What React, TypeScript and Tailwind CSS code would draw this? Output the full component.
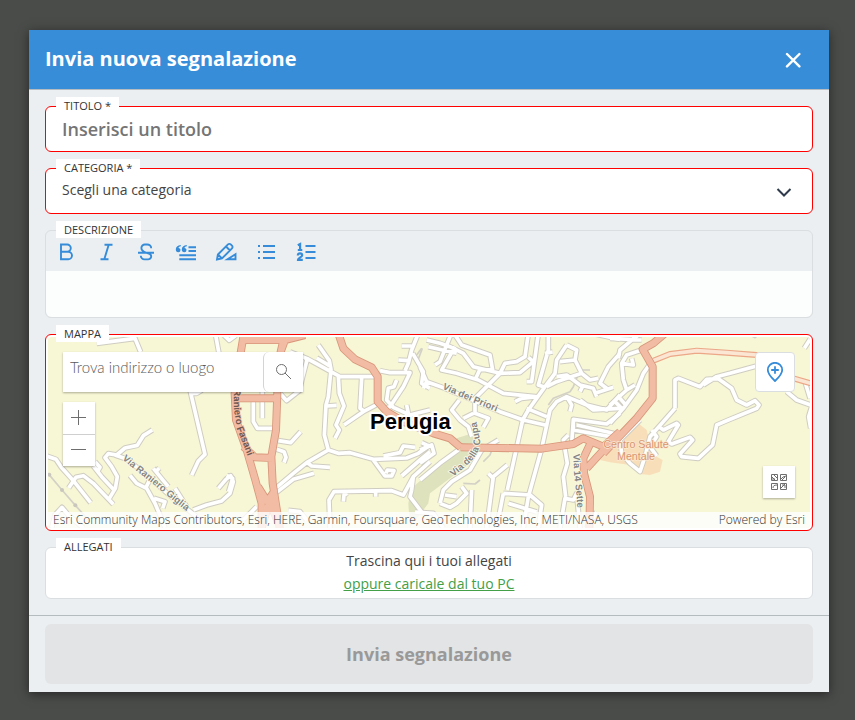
import type { ReactNode } from "react"
import clsx from "clsx"

interface FieldProps {
  id: string
  label: string
  invalid?: boolean
  className?: string
  children: ReactNode
}

function Field({ id, label, invalid, className, children }: FieldProps) {
  return (
    <div className={clsx("relative rounded-md border", invalid ? "border-[#fe0000]" : "border-[#dadee1]", className)}>
      <label
        htmlFor={id}
        className="absolute -top-[10px] left-[10px] z-10 bg-white px-2 text-[11px] leading-[17px] font-medium text-[#333] uppercase"
      >
        {label}
      </label>
      {children}
    </div>
  )
}

const tools = [
  {
    name: "Grassetto",
    icon: <path d="M5 2.500h6.200a3.600 3.600 0 0 1 0 7.200H5zM5 9.700h7.200a3.800 3.800 0 0 1 0 7.600H5z" />,
  },
  {
    name: "Corsivo",
    icon: <path d="M8.500 2.700h8M4.500 17.300h8M12.700 2.700l-4.400 14.600" />,
  },
  {
    name: "Barrato",
    icon: (
      <path d="M2 10.800h16M15.200 6.200c0-2.200-1.800-3.700-4-3.700H9a3.500 3.500 0 0 0-3.600 3.600c0 3.400 3 4 5 4.600 2.600.6 4.800 1.300 4.800 3.500a3.200 3.200 0 0 1-3.400 3.200H8.600a3.600 3.600 0 0 1-3.800-3.600" />
    ),
  },
  {
    name: "Citazione",
    icon: (
      <>
        <path d="M12.500 5.200H20M12.500 9H20M3.300 13.200H20M3.300 17.300H20" />
        <path
          d="M4.800 3C1.500 3.300-.2 5.200-.2 7.500c0 1.700.9 2.700 2.400 2.700a2.200 2.200 0 0 0 2.300-2.200c0-1.200-.8-2-2-2.100.2-.9 1-1.500 2.300-1.700zM10.800 3C7.500 3.300 5.800 5.200 5.800 7.500c0 1.700.9 2.700 2.400 2.700a2.200 2.200 0 0 0 2.300-2.200c0-1.200-.8-2-2-2.100.2-.9 1-1.500 2.300-1.700z"
          fill="currentColor"
          stroke="none"
        />
      </>
    ),
  },
  {
    name: "Evidenzia",
    icon: (
      <>
        <path d="M1 17.500l.9-5L12 2.400a1.900 1.900 0 0 1 2.700 0l1.300 1.300a1.900 1.900 0 0 1 0 2.700L6 16.500zM10 4.500l4 4M2 12.500l4 4" />
        <path d="M11.500 17.300 19.500 12.300v5z" />
      </>
    ),
  },
  {
    name: "Elenco puntato",
    icon: (
      <>
        <path d="M7 4H19M7 10H19M7 16H19" />
        <path d="M2 4h2M2 10h2M2 16h2" />
      </>
    ),
  },
  {
    name: "Elenco numerato",
    icon: (
      <>
        <path d="M9.500 4H19.500M9.500 10H19.500M9.500 16H19.500" />
        <path
          d="M1.800 3.200 4.100 2v6M1.800 8h4.500M1.800 13.500c.1-1.500 1-2.200 2.200-2.200s2.200.7 2.200 1.900c0 1.900-4.200 2.400-4.200 4.600h4.800"
          strokeWidth="2.200"
        />
      </>
    ),
  },
]

interface Tile {
  x: number
  roads: string
  main: string
  minor: string
}

// Map drawn at triple scale, in four tiles laid side by side
const tiles: Tile[] = [
  {
    x: 0,
    roads:
      "M170 40L285 25L302 66M526 10L538 76M552 16L568 31L588 16M450 180L495 373L475 393L455 436M450 190H470L486 180" +
      "M337 300L310 317L292 346L255 354L230 375L205 371L195 383L215 410L232 440L226 475L208 505" +
      "M20 378L48 388L64 412L100 452L152 518M86 474L108 442L130 437L160 460L220 523M160 408L185 440L222 480M165 395L180 412L172 425" +
      "M225 375L262 388L330 445L400 505L470 560M270 436L290 460L320 475L345 520L362 560L375 594M318 472L330 448" +
      "M342 505L375 515L368 535M340 415L370 452L385 470M345 428L358 414M405 475L440 530" +
      "M535 475L558 448L572 437L580 455L570 490L545 513L500 525L460 540M35 594L45 555L66 532L85 555L130 594",
    main: "",
    minor: "M24 430L66 480L106 526L150 575",
  },
  {
    x: 570,
    roads:
      "M265 45L298 92L303 118L295 200L288 225L283 315L295 360M180 66L232 86L330 140H435M260 84L303 110M232 86L218 140L208 182L170 212L150 190" +
      "M325 138L328 190L342 228L318 285L328 300L315 325M290 228L320 226M395 145L390 235L402 243M342 285L400 245L438 225" +
      "M295 360L325 370L360 368L430 388L530 384L565 370L600 345M295 360L230 398L190 430L140 472M252 430L190 448L140 487" +
      "M232 398L245 408L300 412M460 378L510 368L520 348L555 352M430 390L465 438L485 438L492 422L472 420L468 430M515 438L570 390L600 365" +
      "M300 594L297 510L312 485L485 482L520 495L550 440L600 395M340 515L342 495L352 490M437 500V488M145 332L182 338L212 305" +
      "M140 358L162 365L168 382L162 398M70 215V275L82 295H135M97 180V265M450 122L480 128H540L520 170L480 230L465 235" +
      "M500 150L492 170L475 175L470 210L490 232L540 255L600 240M565 10L545 60L535 100L525 122M548 70L580 125L575 160L600 175" +
      "M515 48H545M505 90L535 92M530 225L535 250M575 338L600 350M545 480L540 500L575 546M545 480L550 440" +
      "M-10 436L8 445L-4 485M175 541L210 545L230 570M40 570L80 530",
    main:
      "M325 10L340 55L375 88L425 112L443 140V215L470 245L520 275L610 310L660 325L692 352" +
      "M42 10L30 80L14 190L18 270L50 360L76 450L95 520V600M165 10L152 66L142 190L138 300L124 380L128 460L150 600" +
      "M20 205H140M40 350L75 382L130 384M30 30H165L225 15M165 30L152 66M95 594L118 515L150 590M84 470L112 515L135 480",
    minor: "M577 55L560 100",
  },
  {
    x: 1140,
    roads:
      "M20 30L60 40L90 50L130 70L160 110L240 130M25 50L110 70M92 15L60 95L45 105M105 15L125 45L210 75L218 120L180 118L165 150" +
      "M105 50L65 120L110 130L175 150L250 190L345 200M0 110L20 155L10 175M20 155L75 175L240 245L310 270L375 285" +
      "M240 130L165 205V250L205 265L190 292M325 10L315 80L290 95L255 100L240 130L300 128L340 95L325 82M355 10L335 155H320" +
      "M385 10V60L355 165L375 172M440 45L410 90L405 130L375 170L325 240L308 270L262 480M440 45L470 60L465 90L420 95" +
      "M465 90L485 130L440 145L410 155L380 170M485 130L510 150L535 145M410 140L440 135L480 165L520 175L530 200M490 165L480 185" +
      "M285 215L305 205L350 200M320 235L380 260M600 195L560 240L500 225L440 200L410 215L390 240L365 356L325 500L310 594" +
      "M440 200L455 225L450 245M525 190L580 172M480 210L520 240L600 235M600 250L560 282L460 268L460 300L600 325M460 268L455 340" +
      "M470 285L560 305L600 315M445 315L430 330L442 400L430 440L437 500M118 210L95 240L120 270L145 290L155 320M130 265L160 250" +
      "M60 520L70 480L95 455L150 420L185 360L235 330M0 450L60 400L115 360M0 360L35 345L42 370L0 400M60 520L90 532L110 520L140 490L125 470" +
      "M75 495L110 500M155 480L150 594M262 405L220 440L200 594M205 430L220 445M250 490L330 495L365 525L355 594M250 490L230 594M265 520L350 546" +
      "M420 594L435 505L460 510L470 490L480 594M375 70L398 66M-15 546L40 550L70 594M500 594L530 546M515 10L600 28M600 70L565 110L540 160L560 175",
    main: "M122 352L365 356L460 342L490 325L550 350L600 305M515 332L490 385L492 430L510 500L508 600M555 355L500 415",
    minor: "M385 225L400 205L450 185L460 170L480 120H510M225 335L210 375L190 395M-10 75L5 55M130 460L165 462L180 450",
  },
  {
    x: 1710,
    roads:
      "M195 235V150L205 145L270 170L290 148L325 146L365 175L380 210L410 225L435 212L447 225L440 235L355 270L320 285L308 345L265 385L215 380L210 372L248 330L240 322L185 342L175 335L205 285L200 280L160 300L150 292" +
      "M280 165L320 140L360 130L440 108M195 235L160 275L120 320L105 380L90 425L60 400L35 370L30 330L90 270M125 300L140 320L120 350L140 378" +
      "M530 185L560 210L610 228M585 155L600 205M605 230L596 260L602 295M125 95L100 130L80 180L40 235L0 280" +
      "M0 225L50 180L40 150L35 100L50 75L95 60M25 85L30 60L60 35L85 15M0 25L95 30M35 100L70 105L65 85M583 55L605 20M50 180L75 165M30 205L50 228M15 215L35 235",
    main: "M165 10L130 40L98 58L128 110V205L80 265L-20 370",
    minor: "M420 15L435 23L445 15",
  },
]

function Roads({ kind, className }: { kind: "roads" | "main" | "minor"; className: string }) {
  return (
    <g className={className} fill="none" strokeLinejoin="round">
      {tiles.map((tile) => (
        <path key={tile.x} d={tile[kind]} transform={`translate(${tile.x} 0)`} />
      ))}
    </g>
  )
}

function StreetMap() {
  return (
    <svg
      viewBox="24 21 2286 573"
      preserveAspectRatio="xMidYMid slice"
      className="absolute inset-0 size-full font-['Liberation_Sans',sans-serif] font-bold"
      aria-hidden="true"
    >
      <rect x="24" y="21" width="2286" height="573" fill="#f7f6d5" />
      <path
        d="M1250 325L1290 312L1325 345L1320 370L1290 400L1230 445L1170 490L1165 520L1110 594L1105 520L1115 475L1200 400L1255 360Z"
        fill="#dee3bd"
      />
      <path
        d="M1795 280L1820 300L1830 340L1840 375L1868 390L1860 425L1830 435L1800 432L1770 405L1710 397L1680 390L1740 320Z"
        fill="#f8dfba"
      />
      <Roads kind="minor" className="stroke-[#d3d1c6] stroke-[5px]" />
      <Roads kind="roads" className="stroke-[#cfcdc2] stroke-[17px]" />
      <Roads kind="roads" className="stroke-white stroke-[11px]" />
      <g fill="none" strokeLinejoin="round">
        <path d="M1840 92L1890 72L1970 62L2060 68L2150 75L2220 110L2260 145L2320 162" stroke="#eba787" strokeWidth="18" />
        <path d="M1840 92L1890 72L1970 62L2060 68L2150 75L2220 110L2260 145L2320 162" stroke="#fbe5d3" strokeWidth="11" />
      </g>
      <Roads kind="main" className="stroke-[#d8967a] stroke-[24px]" />
      <Roads kind="main" className="stroke-[#f2bba3] stroke-[19px]" />
      <circle cx="66" cy="480" r="6" fill="#c9c7bd" />
      <circle cx="106" cy="526" r="6" fill="#c9c7bd" />
      <circle cx="28" cy="434" r="6" fill="#c9c7bd" />

      <defs>
        <path id="via-giglia" d="M246 388L330 455L400 512L480 575" />
        <path id="via-fasani" d="M581 178L582 240L592 300L620 370L650 450" />
        <path id="via-priori" d="M1206 176L1290 213L1420 266" />
        <path id="via-cupa" d="M1240 440L1290 398Q1322 365 1320 330L1300 230" />
        <path id="via-sette" d="M1600 372L1602 430L1610 500L1614 594" />
      </defs>
      <g fontSize="29" fill="#858583" stroke="#fbfae8" strokeWidth="5" paintOrder="stroke">
        <text><textPath href="#via-giglia">Via Raniero Giglia</textPath></text>
        <text fill="#6d5750" stroke="#f2bba3"><textPath href="#via-fasani">Raniero Fasani</textPath></text>
        <text><textPath href="#via-priori">Via dei Priori</textPath></text>
        <text><textPath href="#via-cupa">Via della Cupa</textPath></text>
        <text><textPath href="#via-sette">Via 14 Sette</textPath></text>
      </g>
      <g fontSize="32" fontWeight="400" fill="#d9946f" stroke="#fbe9d2" strokeWidth="4" paintOrder="stroke" textAnchor="middle">
        <text x="1788" y="353">Centro Salute</text>
        <text x="1788" y="389">Mentale</text>
      </g>
      <text x="990" y="297" fontSize="66" fill="#000" stroke="#fff" strokeWidth="12" paintOrder="stroke" strokeLinejoin="round">
        Perugia
      </text>
    </svg>
  )
}

function MapField() {
  return (
    <div className="relative overflow-hidden rounded bg-[#f7f6d5] font-light text-[#323232]">
      <StreetMap />
      <div className="relative flex justify-between px-[15px] pt-[15px] pb-[14px]">
        <div className="flex flex-col items-start gap-[10px]">
          <div className="flex h-10 bg-white shadow-[0_1px_2px_rgba(0,0,0,0.3)]">
            <input
              id="mappa"
              type="text"
              placeholder="Trova indirizzo o luogo"
              className="w-[200px] px-[7px] pb-[10px] font-[Lato,sans-serif] text-[15px] outline-none placeholder:text-[#5a5a5a]"
            />
            <button
              type="button"
              aria-label="Cerca"
              className="flex w-10 items-center justify-center rounded-l-md border-l border-[#d4d4d4] text-[#6e6e6e]"
            >
              <svg viewBox="0 0 16 16" className="size-4" fill="none" stroke="currentColor">
                <circle cx="5.500" cy="5.500" r="5" />
                <path d="M9 9L15 15" />
              </svg>
            </button>
          </div>
          <div className="flex w-8 flex-col bg-white text-[#6e6e6e] shadow-[0_1px_2px_rgba(0,0,0,0.3)]">
            <button type="button" aria-label="Ingrandisci" className="flex h-8 items-center justify-center">
              <svg viewBox="0 0 16 16" className="size-4" stroke="currentColor">
                <path d="M7.500 0v15M0 7.500h15" />
              </svg>
            </button>
            <button
              type="button"
              aria-label="Riduci"
              className="flex h-8 items-center justify-center border-t border-[#cfcfcf]"
            >
              <svg viewBox="0 0 16 16" className="size-4" stroke="currentColor">
                <path d="M0 6.500h15" />
              </svg>
            </button>
          </div>
        </div>
        <div className="flex flex-col items-end gap-[74px]">
          <button
            type="button"
            aria-label="Posiziona segnalazione"
            className="flex size-10 items-center justify-center rounded border border-[#dadee1] bg-white text-[#368cd9]"
          >
            <svg viewBox="0 0 20 20" className="size-5" fill="none" stroke="currentColor" strokeWidth="1.800">
              <path d="M10 19C5.500 14.800 2.800 11.700 2.800 8a7.200 7.200 0 0 1 14.400 0c0 3.700-2.700 6.800-7.200 11z" />
              <path d="M10 4.200v7.600M6.200 8h7.600" />
            </svg>
          </button>
          <button
            type="button"
            aria-label="Mappe di base"
            className="flex size-8 items-center justify-center bg-white text-[#6e6e6e] shadow-[0_1px_2px_rgba(0,0,0,0.3)]"
          >
            <svg viewBox="0 0 16 16" className="size-4" fill="none" stroke="currentColor">
              <path d="M.5.5h6v6h-6zM9.500.5h6v6h-6zM.5 9.500h6v6h-6zM9.500 9.500h6v6h-6z" />
              <path d="M.5 2.500l4 4M3 1l3 3M1 5h3M10 5l2-2 3-1M11 6l3-3M2 14c0-2 1-3 4-3M10 14l4-4M11 11h3v3" />
            </svg>
          </button>
        </div>
      </div>
      <div className="relative flex justify-between bg-white/80 px-[5px] text-[12px] leading-4">
        <span>Esri Community Maps Contributors, Esri, HERE, Garmin, Foursquare, GeoTechnologies, Inc, METI/NASA, USGS</span>
        <span>Powered by Esri</span>
      </div>
    </div>
  )
}

export default function App() {
  return (
    <main className="min-h-screen bg-[#4a4c4a] pt-[30px] pr-[26px] pb-7 pl-[29px] font-['Open_Sans',sans-serif] text-[#444]">
      <form
        onSubmit={(e) => e.preventDefault()}
        className="bg-[#ebeff2] shadow-[0_2px_10px_rgba(0,0,0,0.5)]"
      >
        <header className="flex h-[60px] items-center justify-between border-b border-[#b5bcc2] bg-[#388dd9] px-4 text-white">
          <h1 className="pb-0.5 text-[20px] leading-7 font-bold">Invia nuova segnalazione</h1>
          <button type="button" aria-label="Chiudi" className="flex size-10 items-center justify-center">
            <svg viewBox="0 0 16 16" className="size-4" stroke="currentColor" strokeWidth="2.400" strokeLinecap="round">
              <path d="M2 2l12.400 12.400M14.400 2L2 14.400" />
            </svg>
          </button>
        </header>

        <div className="flex flex-col gap-4 p-4">
          <Field id="titolo" label="Titolo *" invalid className="bg-white">
            <input
              id="titolo"
              type="text"
              placeholder="Inserisci un titolo"
              className="block h-11 w-full rounded-md px-4 text-[18px] font-semibold outline-none placeholder:text-[#757575]"
            />
          </Field>

          <Field id="categoria" label="Categoria *" invalid className="bg-white">
            <select
              id="categoria"
              className="block h-11 w-full appearance-none rounded-md px-4 pb-1 text-[14px] outline-none"
            >
              <option>Scegli una categoria</option>
            </select>
            <svg
              viewBox="0 0 16 16"
              className="pointer-events-none absolute top-4 right-5 size-4"
              fill="none"
              stroke="#2f3b4c"
              strokeWidth="2"
            >
              <path d="M1.500 4L8 10.500l6.500-6.500" />
            </svg>
          </Field>

          <Field id="descrizione" label="Descrizione">
            <div className="flex h-10 items-center pt-0.5">
              {tools.map((tool) => (
                <button
                  key={tool.name}
                  type="button"
                  aria-label={tool.name}
                  className="flex size-10 items-center justify-center text-[#368cd9]"
                >
                  <svg viewBox="0 0 20 20" className="size-5 overflow-visible" fill="none" stroke="currentColor" strokeWidth="1.900">
                    {tool.icon}
                  </svg>
                </button>
              ))}
            </div>
            <textarea
              id="descrizione"
              className="block h-[46px] w-full resize-none rounded-b-md bg-[#fcfefd] px-4 py-2 text-[14px] outline-none"
            />
          </Field>

          <Field id="mappa" label="Mappa" invalid className="bg-white p-0.5">
            <MapField />
          </Field>

          <Field id="allegati" label="Allegati" className="bg-white">
            <div className="flex flex-col items-center pt-px pb-[3px] text-[14px] leading-[23px]">
              <p>Trascina qui i tuoi allegati</p>
              <button id="allegati" type="button" className="text-[#43a047] underline">
                oppure caricale dal tuo PC
              </button>
            </div>
          </Field>
        </div>

        <footer className="border-t border-[#b5bcc0] px-4 py-2">
          <button type="submit" disabled className="h-[60px] w-full rounded-md bg-[#e2e4e5] text-[18px] font-bold text-[#999]">
            Invia segnalazione
          </button>
        </footer>
      </form>
    </main>
  )
}
